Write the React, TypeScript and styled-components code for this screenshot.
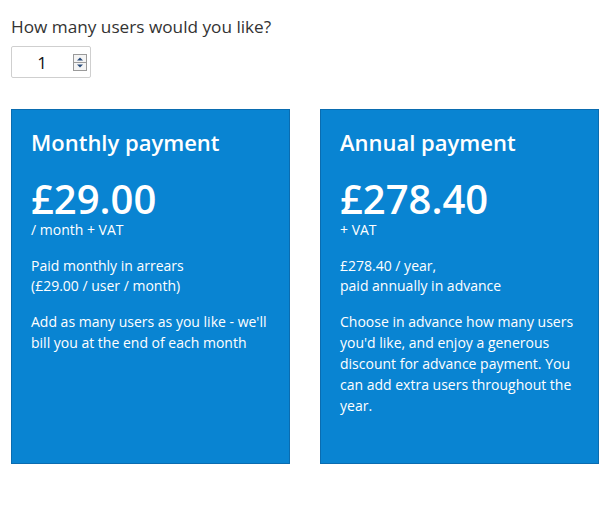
import React, { useState } from "react";
import styled, { createGlobalStyle } from "styled-components";

const GlobalStyle = createGlobalStyle`
  body {
    margin: 0;
    background: #ffffff;
    font-family: "Open Sans", "Noto Sans", sans-serif;
    color: #333333;
  }
`;

const Page = styled.div`
  padding: 15px 11px 0 11px;
  width: 613px;
  box-sizing: border-box;
`;

const Question = styled.label`
  display: block;
  font-size: 17.2px;
  line-height: 24px;
  color: #333333;
  margin-bottom: 7px;
`;

const InputBox = styled.div`
  display: flex;
  align-items: center;
  width: 80px;
  height: 32px;
  box-sizing: border-box;
  border: 1px solid #cfcfcf;
  border-radius: 2px;
  background: #fff;
`;

const NumberField = styled.input`
  width: 60px;
  border: none;
  outline: none;
  background: transparent;
  text-align: center;
  font-family: "Open Sans", sans-serif;
  font-size: 17px;
  color: #111;
  padding: 0;
  appearance: textfield;
  &::-webkit-inner-spin-button,
  &::-webkit-outer-spin-button {
    -webkit-appearance: none;
    margin: 0;
  }
`;

const Spinner = styled.div`
  display: flex;
  flex-direction: column;
  margin-left: 1px;
`;

const Cards = styled.div`
  display: flex;
  gap: 30px;
  margin-top: 31px;
`;

const Card = styled.div`
  width: 279px;
  height: 355px;
  box-sizing: border-box;
  background: #0984d2;
  border: 1px solid #0a6cb0;
  padding: 16px 19px;
  color: #ffffff;
`;

const Title = styled.h2`
  margin: 0;
  font-size: 22px;
  font-weight: 600;
  line-height: 32px;
`;

const Price = styled.div`
  margin-top: 21px;
  font-size: 40px;
  font-weight: 600;
  line-height: 40px;
`;

const Unit = styled.div`
  margin-top: 2px;
  font-size: 14px;
  line-height: 18px;
`;

const Para = styled.p<{ $gap: number; $lh: number }>`
  margin: ${(p) => p.$gap}px 0 0;
  font-size: 14px;
  line-height: ${(p) => p.$lh}px;
`;

const SpinArrows = () => (
  <svg width="14" height="17" viewBox="0 0 14 17">
    <rect x="0.5" y="0.5" width="13" height="16" fill="#f4f4f4" stroke="#9a9a9a" />
    <line x1="0.5" y1="8.5" x2="13.5" y2="8.5" stroke="#9a9a9a" />
    <path d="M4 6.5 L7 3.5 L10 6.5 Z" fill="#2a4c7a" />
    <path d="M4 10.5 L7 13.5 L10 10.5 Z" fill="#2a4c7a" />
  </svg>
);

export default function App() {
  const [users, setUsers] = useState("1");
  return (
    <Page>
      <GlobalStyle />
      <Question htmlFor="users">How many users would you like?</Question>
      <InputBox>
        <NumberField
          id="users"
          type="number"
          min={1}
          value={users}
          onChange={(e) => setUsers(e.target.value)}
        />
        <Spinner>
          <SpinArrows />
        </Spinner>
      </InputBox>
      <Cards>
        <Card>
          <Title>Monthly payment</Title>
          <Price>£29.00</Price>
          <Unit>/ month + VAT</Unit>
          <Para $gap={17} $lh={20}>
            Paid monthly in arrears
            <br />
            (£29.00 / user / month)
          </Para>
          <Para $gap={15} $lh={21}>
            Add as many users as you like - we'll bill you at the end of each month
          </Para>
        </Card>
        <Card>
          <Title>Annual payment</Title>
          <Price>£278.40</Price>
          <Unit>+ VAT</Unit>
          <Para $gap={17} $lh={20}>
            £278.40 / year,
            <br />
            paid annually in advance
          </Para>
          <Para $gap={15} $lh={21}>
            Choose in advance how many users you'd like, and enjoy a generous discount
            for advance payment. You can add extra users throughout the year.
          </Para>
        </Card>
      </Cards>
    </Page>
  );
}
